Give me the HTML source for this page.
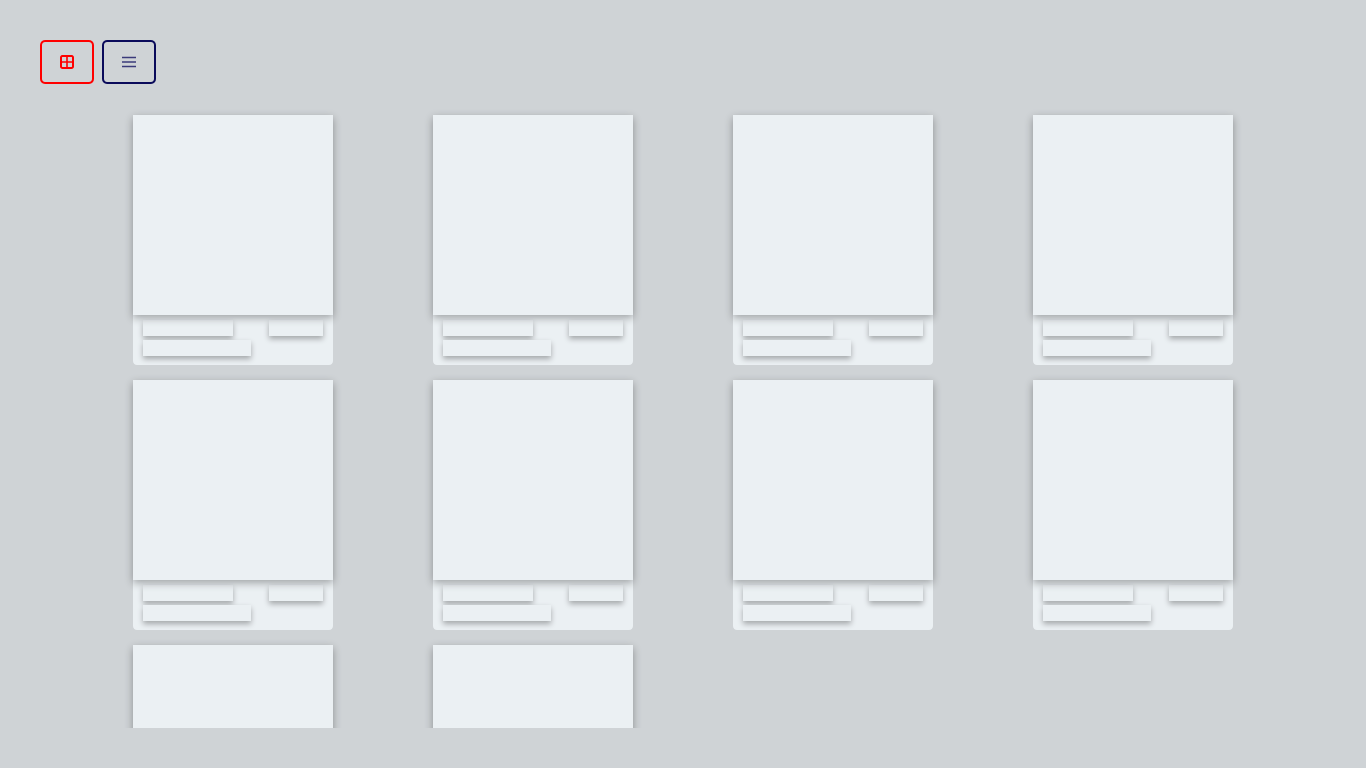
<!DOCTYPE html>
<html style="overflow:hidden;height:768px"><head><style>
body{margin:0;width:1366px;height:768px;background:#cfd3d6;font-family:"Liberation Sans",sans-serif;position:relative;overflow:hidden}
.btn{position:absolute;top:40px;border:2px solid;border-radius:5px;box-sizing:border-box;width:54px;height:44px;display:flex;align-items:center;justify-content:center}
.wrap{position:absolute;left:0;top:0;width:1366px;height:728px;overflow:hidden}
.card{position:absolute;width:200px;height:250px;background:#ebf0f3;border-radius:0 0 4px 4px}
.img{position:absolute;left:0;top:0;width:200px;height:200px;background:#ebf0f3;box-shadow:0 3px 8px rgba(0,0,0,.32)}
.b{position:absolute;height:16px;background:#ebf0f3;box-shadow:0 3px 6px rgba(0,0,0,.3)}
</style></head><body>
<div class="btn" style="left:40px;border-color:#f00">
<svg width="14" height="14" viewBox="0 0 14 14"><rect x="1" y="1" width="12" height="12" rx="1.5" fill="none" stroke="#f00" stroke-width="2"/><path d="M7 1V13M1 7H13" stroke="#f00" stroke-width="1.6"/></svg></div>
<div class="btn" style="left:102px;border-color:#0a0a5a">
<svg width="16" height="14" viewBox="0 0 16 14"><path d="M1 2.5H15M1 7H15M1 11.5H15" stroke="#3a3a7a" stroke-width="1.5"/></svg></div>
<div class="wrap" id="w"></div>
<script>
var w=document.getElementById('w'),h='';
var xs=[133,433,733,1033],ys=[115,380,645];
for(var r=0;r<3;r++)for(var c=0;c<4;c++){if(r==2&&c>1)break;
h+='<div class="card" style="left:'+xs[c]+'px;top:'+ys[r]+'px"><div class="b" style="left:10px;top:205px;width:90px"></div><div class="b" style="left:136px;top:205px;width:54px"></div><div class="b" style="left:10px;top:225px;width:108px"></div><div class="img"></div></div>';}
w.innerHTML=h;
</script>
</body></html>
